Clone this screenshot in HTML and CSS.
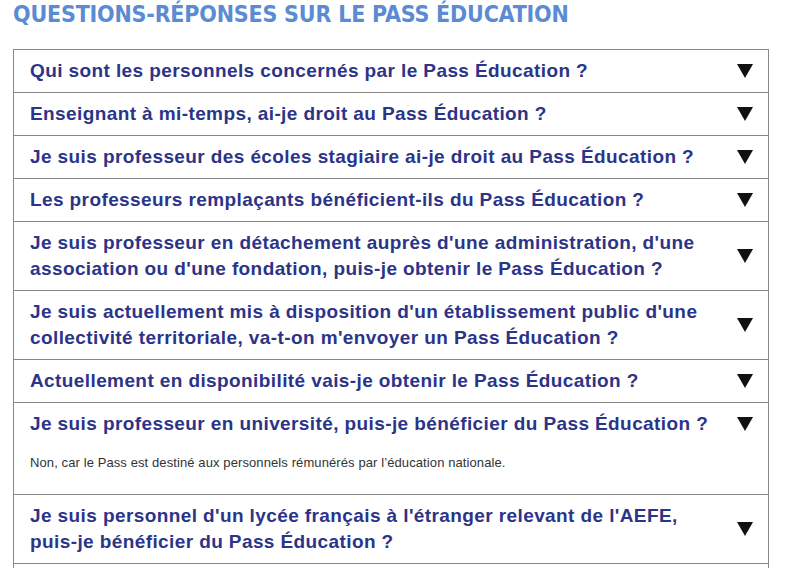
FILE: index.html
```html
<!DOCTYPE html>
<html lang="fr">
<head>
  <meta charset="UTF-8">
  <title>Questions-réponses sur le Pass Éducation</title>
  <link rel="stylesheet" href="styles.css">
</head>
<body>
  <div class="page">
    <h2 class="titre">Questions-réponses sur le Pass Éducation</h2>

    <div class="faq">
      <div class="question">
        <span class="intitule">Qui sont les personnels concernés par le Pass Éducation ?</span>
        <svg class="fleche" viewBox="0 0 16 14"><polygon points="0,0 16,0 8,14"/></svg>
      </div>
      <div class="question">
        <span class="intitule">Enseignant à mi-temps, ai-je droit au Pass Éducation ?</span>
        <svg class="fleche" viewBox="0 0 16 14"><polygon points="0,0 16,0 8,14"/></svg>
      </div>
      <div class="question">
        <span class="intitule">Je suis professeur des écoles stagiaire ai-je droit au Pass Éducation ?</span>
        <svg class="fleche" viewBox="0 0 16 14"><polygon points="0,0 16,0 8,14"/></svg>
      </div>
      <div class="question">
        <span class="intitule">Les professeurs remplaçants bénéficient-ils du Pass Éducation ?</span>
        <svg class="fleche" viewBox="0 0 16 14"><polygon points="0,0 16,0 8,14"/></svg>
      </div>
      <div class="question">
        <span class="intitule">Je suis professeur en détachement auprès d'une administration, d'une association ou d'une fondation, puis-je obtenir le Pass Éducation ?</span>
        <svg class="fleche" viewBox="0 0 16 14"><polygon points="0,0 16,0 8,14"/></svg>
      </div>
      <div class="question">
        <span class="intitule">Je suis actuellement mis à disposition d'un établissement public d'une collectivité territoriale, va-t-on m'envoyer un Pass Éducation ?</span>
        <svg class="fleche" viewBox="0 0 16 14"><polygon points="0,0 16,0 8,14"/></svg>
      </div>
      <div class="question">
        <span class="intitule">Actuellement en disponibilité vais-je obtenir le Pass Éducation ?</span>
        <svg class="fleche" viewBox="0 0 16 14"><polygon points="0,0 16,0 8,14"/></svg>
      </div>
      <div class="question ouverte">
        <span class="intitule">Je suis professeur en université, puis-je bénéficier du Pass Éducation ?</span>
        <svg class="fleche" viewBox="0 0 16 14"><polygon points="0,0 16,0 8,14"/></svg>
      </div>
      <div class="reponse">
        <p>Non, car le Pass est destiné aux personnels rémunérés par l’éducation nationale.</p>
      </div>
      <div class="question">
        <span class="intitule">Je suis personnel d'un lycée français à l'étranger relevant de l'AEFE, puis-je bénéficier du Pass Éducation ?</span>
        <svg class="fleche" viewBox="0 0 16 14"><polygon points="0,0 16,0 8,14"/></svg>
      </div>
      <div class="question">
        <span class="intitule">Je suis retraité, ai-je droit au Pass Éducation ?</span>
        <svg class="fleche" viewBox="0 0 16 14"><polygon points="0,0 16,0 8,14"/></svg>
      </div>
    </div>
  </div>
</body>
</html>
```

FILE: styles.css
```css
body {
  margin: 0;
  padding: 0;
  background: #fff;
  font-family: "Liberation Sans", Arial, sans-serif;
}

.page {
  width: 756px;
  padding: 0 0 0 13px;
}

.titre {
  margin: 0;
  padding-top: 1px;
  height: 48px;
  font-family: "DejaVu Sans Condensed", "DejaVu Sans", sans-serif;
  font-stretch: condensed;
  font-weight: 700;
  font-size: 23px;
  line-height: 26px;
  text-transform: uppercase;
  letter-spacing: -0.2px;
  color: #5b8bd3;
}

.faq {
  border: 1px solid #888;
  border-bottom: none;
}

.question {
  display: flex;
  align-items: center;
  justify-content: space-between;
  padding: 8px 15px 8px 16px;
  border-bottom: 1px solid #888;
  color: #2c3488;
  font-size: 19px;
  font-weight: 700;
  line-height: 26px;
  letter-spacing: 0.4px;
}

.question.ouverte {
  border-bottom: none;
}

.intitule {
  max-width: 690px;
}

.fleche {
  width: 16px;
  height: 14px;
  flex-shrink: 0;
  fill: #111;
}

.reponse {
  border-bottom: 1px solid #888;
  padding: 9px 16px 23px;
}

.reponse p {
  margin: 0;
  font-size: 13px;
  line-height: 17px;
  letter-spacing: 0.1px;
  color: #333;
}
```
